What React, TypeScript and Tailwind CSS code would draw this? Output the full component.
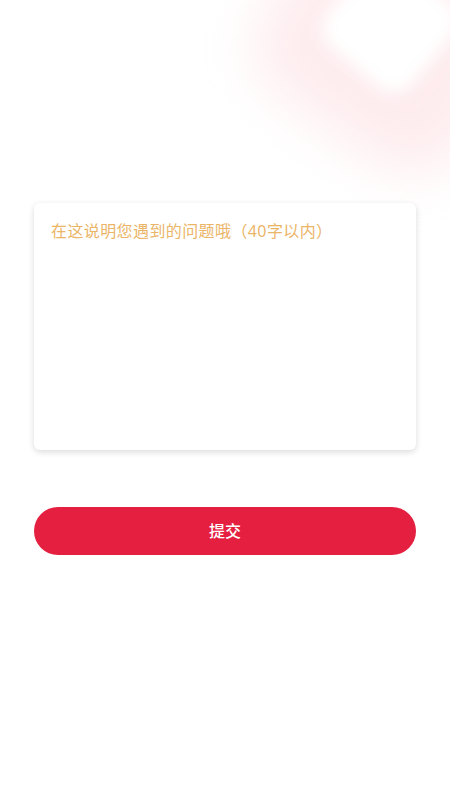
export default function App() {
  return (
    <div
      className="relative w-[450px] h-[800px] overflow-hidden bg-white"
      style={{ fontFamily: '"Noto Sans", "Noto Sans CJK SC", sans-serif' }}
    >
      {/* faint blurred decoration, top right */}
      <div className="absolute -top-[80px] left-[275px] w-[240px] h-[230px] rounded-[60px] rotate-[35deg] bg-[#fde0e4] opacity-60 blur-[26px]" />
      <div className="absolute -top-[30px] left-[335px] w-[110px] h-[110px] rounded-[24px] rotate-[40deg] bg-white blur-[8px]" />

      <div className="relative flex flex-col px-[34px] pt-[203px]">
        <div className="h-[247px] rounded-[6px] bg-white shadow-[0_2px_6px_rgba(0,0,0,0.15)] px-[17px] pt-[14px]">
          <div className="text-[16px] leading-[28px] tracking-[0.4px] text-[#ebb568]">在这说明您遇到的问题哦（40字以内）</div>
        </div>

        <button className="mt-[57px] h-[48px] rounded-full bg-[#e41f40] text-white text-[16px] font-medium">
          提交
        </button>
      </div>
    </div>
  );
}
